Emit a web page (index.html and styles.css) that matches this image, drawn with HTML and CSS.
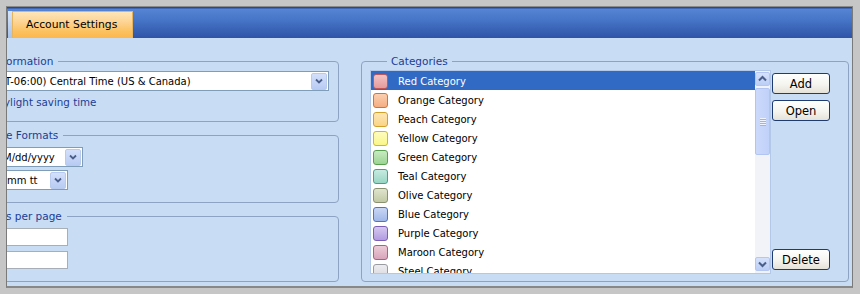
FILE: index.html
```html
<!DOCTYPE html>
<html>
<head>
<meta charset="utf-8">
<title>Account Settings</title>
<link rel="stylesheet" href="styles.css">
</head>
<body>
<div class="frame">
  <div class="window">
    <div class="header">
      <div class="tab-edge"></div>
      <div class="tab">Account Settings</div>
    </div>
    <div class="content">
      <div class="left">
        <fieldset class="group g1">
          <legend>ormation</legend>
          <div class="select s1"><span class="val">T-06:00) Central Time (US &amp; Canada)</span><span class="drop"><svg width="10" height="8" viewBox="0 0 10 8"><path d="M2 2.5 L5 5.5 L8 2.5" fill="none" stroke="#4a5f8a" stroke-width="1.8"/></svg></span></div>
          <div class="label">ylight saving time</div>
        </fieldset>
        <fieldset class="group g2">
          <legend>e Formats</legend>
          <div class="select s2"><span class="val">M/dd/yyyy</span><span class="drop"><svg width="10" height="8" viewBox="0 0 10 8"><path d="M2 2.5 L5 5.5 L8 2.5" fill="none" stroke="#4a5f8a" stroke-width="1.8"/></svg></span></div>
          <div class="select s3"><span class="val">mm tt</span><span class="drop"><svg width="10" height="8" viewBox="0 0 10 8"><path d="M2 2.5 L5 5.5 L8 2.5" fill="none" stroke="#4a5f8a" stroke-width="1.8"/></svg></span></div>
        </fieldset>
        <fieldset class="group g3">
          <legend>s per page</legend>
          <div class="input i1"></div>
          <div class="input i2"></div>
        </fieldset>
      </div>
      <fieldset class="group cats">
        <legend>Categories</legend>
        <div class="cat-body">
          <div class="listbox">
            <ul class="list">
              <li class="sel"><span class="sw red"></span>Red Category</li>
              <li><span class="sw orange"></span>Orange Category</li>
              <li><span class="sw peach"></span>Peach Category</li>
              <li><span class="sw yellow"></span>Yellow Category</li>
              <li><span class="sw green"></span>Green Category</li>
              <li><span class="sw teal"></span>Teal Category</li>
              <li><span class="sw olive"></span>Olive Category</li>
              <li><span class="sw blue"></span>Blue Category</li>
              <li><span class="sw purple"></span>Purple Category</li>
              <li><span class="sw maroon"></span>Maroon Category</li>
              <li><span class="sw steel"></span>Steel Category</li>
            </ul>
            <div class="scrollbar">
              <div class="arrow up"><svg width="13" height="12" viewBox="0 0 13 12"><path d="M3 7.5 L6.5 4 L10 7.5" fill="none" stroke="#4a5f8a" stroke-width="2"/></svg></div>
              <div class="thumb"><span class="grip"></span><span class="grip"></span><span class="grip"></span><span class="grip"></span></div>
              <div class="track"></div>
              <div class="arrow down"><svg width="13" height="12" viewBox="0 0 13 12"><path d="M3 4.5 L6.5 8 L10 4.5" fill="none" stroke="#4a5f8a" stroke-width="2"/></svg></div>
            </div>
          </div>
          <div class="btns">
            <button class="btn">Add</button>
            <button class="btn open">Open</button>
            <button class="btn del">Delete</button>
          </div>
        </div>
      </fieldset>
    </div>
  </div>
</div>
</body>
</html>
```
FILE: styles.css
```css
* { box-sizing: border-box; }
html, body { margin: 0; padding: 0; }
body {
  width: 860px;
  height: 294px;
  overflow: hidden;
  font-family: "DejaVu Sans", Verdana, sans-serif;
  font-size: 10px;
  color: #000;
  background: #c6c6c6;
}
.frame {
  width: 860px;
  height: 294px;
  padding: 6px 7px 6px 6px;
  background: #c6c6c6;
}
.window {
  height: 282px;
  display: flex;
  flex-direction: column;
  border-top: 1px solid #8a8a8a;
  border-left: 1px solid #7a7a7a;
  border-right: 1px solid #7a7a7a;
  border-bottom: 2px solid #888;
  background: #c8dcf3;
}
.header {
  flex: none;
  height: 31px;
  display: flex;
  align-items: flex-end;
  padding-left: 1px;
  background: linear-gradient(to bottom, #27489a 0, #27489a 1px, #5585d5 2px, #4573c5 45%, #2e53a7 100%);
}
.tab-edge {
  width: 4px;
  height: 27px;
  background: linear-gradient(#d6e4f9, #a9c3ec);
}
.tab {
  width: 121px;
  height: 27px;
  padding-left: 13px;
  line-height: 26px;
  font-size: 10.8px;
  color: #000;
  border: 1px solid #e6b35f;
  border-bottom: none;
  background: linear-gradient(#fee6b8, #fdd391 40%, #fcc15f 75%, #fbb74c);
}
.content {
  flex: 1;
  display: flex;
  align-items: flex-start;
  padding: 17px 3px 0 0;
  overflow: hidden;
}
.left {
  flex: none;
  width: 362px;
  margin-left: -30px;
  display: flex;
  flex-direction: column;
}
.group {
  margin: 0;
  min-width: 0;
  border: 1px solid #8ea3c3;
  border-radius: 4px;
}
.group legend {
  padding: 0 5px 0 0;
  margin-left: 16px;
  font-size: 10.5px;
  line-height: 13px;
  color: #1c3d96;
}
.left .group { padding: 0 8px 12px 12px; }
.g2, .g3 { margin-top: 7px; }
.g2, .g3 { padding-bottom: 13px; }

.select {
  height: 20px;
  display: flex;
  align-items: center;
  border: 1px solid #7f9db9;
  background: #fff;
  white-space: nowrap;
}
.select .val { flex: 1; overflow: hidden; }
.drop {
  flex: none;
  width: 16px;
  height: 17px;
  margin-right: 1px;
  display: flex;
  align-items: center;
  justify-content: center;
  border: 1px solid #b9caef;
  border-radius: 2px;
  background: linear-gradient(#d4e0fb, #b8cbf3);
}
.s1 { width: 339px; margin-top: 3px; padding-left: 14px; }
.s2 { width: 93px; margin-top: 5px; padding-left: 12px; }
.s3 { width: 78px; margin-top: 3px; padding-left: 16px; }
.label {
  margin: 5px 0 0 14px;
  line-height: 13px;
  font-size: 10.3px;
  color: #1c3d96;
}
.input {
  width: 78px;
  height: 18px;
  border: 1px solid #a7aeb8;
  background: #fff;
}
.i1 { margin-top: 5px; }
.i2 { margin-top: 5px; }

.cats {
  flex: none;
  width: 488px;
  margin-left: 22px;
  padding: 2px 18px 7px 8px;
}
.cats legend {
  margin-left: 17px;
  padding: 0 4px;
}
.cat-body {
  display: flex;
  height: 204px;
}
.listbox {
  flex: none;
  width: 401px;
  height: 204px;
  display: flex;
  border: 1px solid #b3c8e8;
  background: #fff;
}
.list {
  flex: 1;
  margin: 0;
  padding: 0;
  list-style: none;
  overflow: hidden;
}
.list li {
  height: 19px;
  display: flex;
  align-items: center;
  padding: 1px 0 0 2px;
  white-space: nowrap;
}
.list li.sel { background: #316ac5; color: #fff; }
.sw {
  flex: none;
  width: 15px;
  height: 15px;
  margin-right: 10px;
  border-radius: 3px;
  border: 1px solid;
}
.red    { border-color: #c0585b; background: linear-gradient(#f3c3c4, #e59a9c); }
.orange { border-color: #c9773d; background: linear-gradient(#fbd0b1, #f4ae80); }
.peach  { border-color: #d39f2b; background: linear-gradient(#fde7b6, #fad486); }
.yellow { border-color: #c7bc2c; background: linear-gradient(#fefcc0, #fbf689); }
.green  { border-color: #58a04e; background: linear-gradient(#c8eac2, #9bd592); }
.teal   { border-color: #4c9d8a; background: linear-gradient(#c6ebe0, #98d6c4); }
.olive  { border-color: #8a9171; background: linear-gradient(#dfe4cd, #c1c9a6); }
.blue   { border-color: #5373bb; background: linear-gradient(#c9d7f4, #a0b7e8); }
.purple { border-color: #7b5db5; background: linear-gradient(#d5c8f0, #b29bdf); }
.maroon { border-color: #a36580; background: linear-gradient(#ecccd9, #d8a4ba); }
.steel  { border-color: #9a9aa2; background: linear-gradient(#ededf0, #d8d8dd); }

.scrollbar {
  flex: none;
  width: 15px;
  display: flex;
  flex-direction: column;
  padding: 1px 0 2px;
  background: #f1f3f8;
}
.arrow {
  flex: none;
  height: 14px;
  display: flex;
  align-items: center;
  justify-content: center;
  border: 1px solid #b5c7f0;
  border-radius: 2px;
  background: linear-gradient(#d6e2fc, #bccef6);
}
.thumb {
  flex: none;
  height: 67px;
  margin-top: 2px;
  display: flex;
  flex-direction: column;
  align-items: center;
  justify-content: center;
  gap: 1px;
  border: 1px solid #b2c5f2;
  border-radius: 2px;
  background: linear-gradient(to right, #cbd9fb, #c0d1f9);
}
.grip {
  width: 6px;
  height: 1px;
  background: #eef3ff;
  box-shadow: 0 1px 0 #9fb4e4;
}
.track { flex: 1; }

.btns {
  flex: none;
  width: 58px;
  margin-left: 1px;
  display: flex;
  flex-direction: column;
  padding: 3px 0 4px;
}
.btn {
  height: 21px;
  padding: 0;
  border: 1px solid #1e3c72;
  border-radius: 3px;
  background: linear-gradient(#ffffff, #f5f4ef 55%, #e4e2d8);
  font-family: "DejaVu Sans", Verdana, sans-serif;
  font-size: 11.5px;
  color: #000;
}
.open { margin-top: 6px; }
.del { margin-top: auto; }
```
